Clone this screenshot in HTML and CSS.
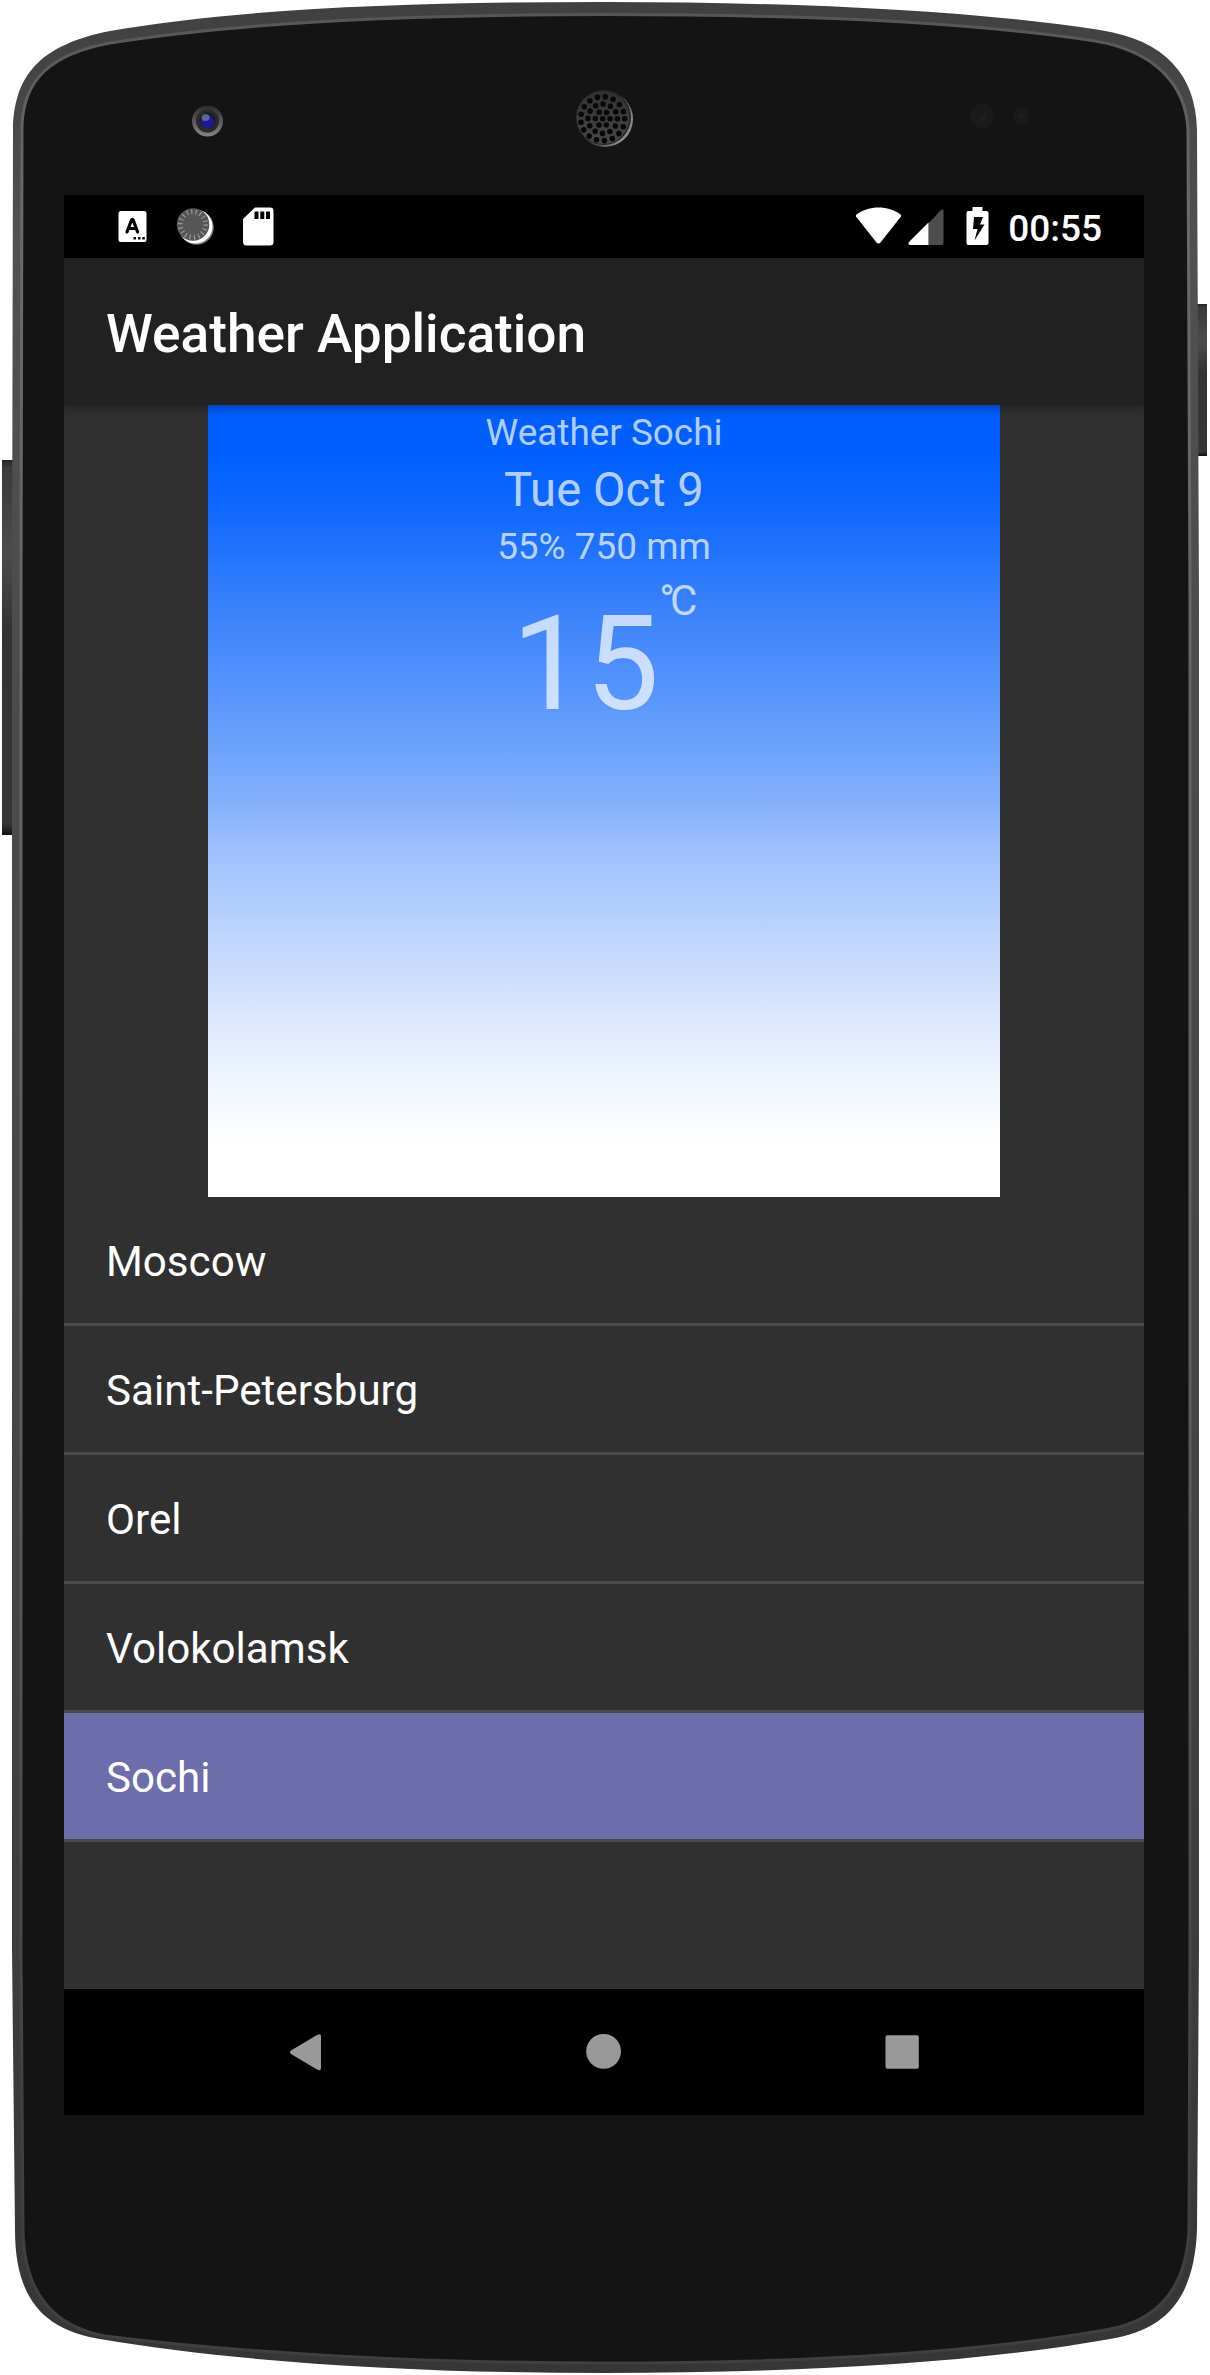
FILE: index.html
```html
<!DOCTYPE html>
<html lang="en">
<head>
<meta charset="utf-8">
<title>Weather Application</title>
<link rel="stylesheet" href="styles.css">
</head>
<body>
<div class="device">
  <svg class="frame" viewBox="0 0 1210 2375" aria-hidden="true">
    <defs>
      <linearGradient id="rim" x1="0" y1="0" x2="0" y2="1">
        <stop offset="0" stop-color="#404041"/><stop offset=".1" stop-color="#505052"/><stop offset=".6" stop-color="#454547"/><stop offset="1" stop-color="#363636"/>
      </linearGradient>
      <linearGradient id="shine" x1="0" y1="0" x2="0" y2="1">
        <stop offset="0" stop-color="#565657"/><stop offset=".08" stop-color="#6a6a6d"/><stop offset=".6" stop-color="#5c5c5f"/><stop offset=".9" stop-color="#404040"/><stop offset="1" stop-color="#404040"/>
      </linearGradient>
      <linearGradient id="key" x1="0" y1="0" x2="0" y2="1">
        <stop offset="0" stop-color="#242424"/><stop offset=".02" stop-color="#3a3a3a"/><stop offset=".25" stop-color="#4c4c4c"/><stop offset=".45" stop-color="#333"/><stop offset=".97" stop-color="#363636"/><stop offset="1" stop-color="#111"/>
      </linearGradient>
      <linearGradient id="lens" x1="0" y1="0" x2="0" y2="1">
        <stop offset="0" stop-color="#2b2b2b"/><stop offset="1" stop-color="#858585"/>
      </linearGradient>
      <radialGradient id="glass" cx=".5" cy=".6" r=".5">
        <stop offset="0" stop-color="#1a14b4"/><stop offset=".6" stop-color="#201d86"/><stop offset="1" stop-color="#17172e"/>
      </radialGradient>
      <linearGradient id="ring" x1="0" y1="0" x2="1" y2=".5">
        <stop offset=".4" stop-color="#262626"/><stop offset="1" stop-color="#8a8a8a"/>
      </linearGradient>
      <linearGradient id="mesh" x1="0" y1="0" x2="0" y2="1">
        <stop offset="0" stop-color="#303030"/><stop offset="1" stop-color="#484848"/>
      </linearGradient>
    </defs>
    <rect x="2" y="460" width="12" height="375" fill="url(#key)"/>
    <rect x="1196" y="304" width="11" height="152" fill="url(#key)"/>
    <path fill="url(#rim)" d="M12 600 L13 130 C14 75 40 45 110 31 C240 8 420 2 605 2 C790 2 970 10 1100 30 C1165 40 1196 75 1197 130 L1199 600 L1199 1950 L1197 2230 C1194 2300 1165 2330 1110 2339 C970 2364 790 2373 605 2373 C420 2373 240 2363 100 2339 C45 2330 15 2300 15 2230 L12 1950 Z"/>
    <path fill="#141414" stroke="url(#shine)" stroke-width="3" d="M21 600 L22 125 C24 80 50 54 110 43 C240 22 420 14.500 605 14.500 C790 14.500 970 22 1095 41 C1155 51 1186 85 1188 130 L1190 600 L1190 1950 L1189 2230 C1186 2290 1156 2322 1105 2330 C970 2354 790 2363 605 2363 C420 2363 240 2353 105 2336 C50 2326 24 2290 23 2230 L21 1950 Z"/>
    <circle cx="207.500" cy="121" r="15.500" fill="url(#lens)"/>
    <circle cx="207.500" cy="121" r="11.500" fill="#2a2a2c"/>
    <circle cx="207.500" cy="120.500" r="8" fill="url(#glass)"/>
    <ellipse cx="205.500" cy="117.500" rx="4" ry="3.500" fill="#8e96ad" opacity=".6"/>
    <circle cx="982" cy="116" r="12" fill="#1b1a1a"/><circle cx="983" cy="118" r="3" fill="#251d1b"/>
    <circle cx="1021" cy="116" r="8" fill="#1b1a1a"/><circle cx="1021" cy="117" r="2.500" fill="#251d1b"/>
    <circle cx="605" cy="119" r="28" fill="url(#ring)"/>
    <circle cx="603.500" cy="117.500" r="27.500" fill="#222"/>
    <circle cx="603" cy="117.500" r="26.500" fill="url(#mesh)"/>
    <g stroke="#080808" stroke-width="5.600" stroke-linecap="round" fill="none">
      <circle cx="602.700" cy="118.700" r="7.300" stroke-dasharray="0 7.645"/>
      <circle cx="602.700" cy="118.700" r="14.700" stroke-dasharray="0 7.697"/>
      <circle cx="602.700" cy="118.700" r="22" stroke-dasharray="0 8.131"/>
      <path d="M602.700 118.700h.01"/>
    </g>
  </svg>

  <main class="screen">
    <header class="status-bar">
      <svg class="status-icons" viewBox="0 0 180 63" aria-hidden="true">
        <rect x="54.500" y="16" width="28" height="31" rx="2.500" fill="#fff"/>
        <path d="M63 37 L67.500 25 Q68.300 23.500 69.200 25 L73.600 37 M65 33.500h7" fill="none" stroke="#000" stroke-width="3.200" stroke-linecap="round" stroke-linejoin="round"/>
        <path d="M69.500 42h2.500v2.500h-2.500zM74 42h2.500v2.500H74zM78.300 42h2.500v2.500h-2.500z"/>
        <circle cx="132.500" cy="32.500" r="17.300" fill="#777"/>
        <circle cx="131.500" cy="31.500" r="17" fill="#fff"/>
        <circle cx="129" cy="29.500" r="16.300" fill="#565656"/>
        <circle cx="129" cy="29.500" r="12.700" fill="none" stroke="#999" stroke-width="5" stroke-dasharray="1.200 3.233"/>
        <path d="M191 12.500 h15 a3.500 3.500 0 0 1 3.500 3.500 v31 a3.500 3.500 0 0 1-3.500 3.500 h-23.500 a3.500 3.500 0 0 1-3.500-3.500 V24 Z" fill="#fff"/>
        <path d="M190.500 16.500h4v7.500h-4zM196.300 16.500h4v7.500h-4zM202 16.500h4v7.500h-4z"/>
      </svg>
      <div class="status-right">
        <svg class="signals" viewBox="0 0 133 38" aria-hidden="true">
          <path d="M.5 7.500 C13-1.800 32-1.800 44.500 7.500 Q45.500 8.500 45 9.500 L24.500 35.500 Q22.500 37.500 20.500 35.500 L0 9.500 Q-.5 8.500 .5 7.500Z" fill="#fff"/>
          <path d="M72.500 16.500 L84 4 Q87.500 1 87.500 4 V36 Q87.500 38 85.500 38 H72.500Z" fill="#4d4d4d"/>
          <path d="M72.500 15.500 V38 H54 Q51 37 53.500 34.500Z" fill="#fff"/>
          <path fill-rule="evenodd" d="M116.500 0h10v4h4q2 0 2 2v30q0 2-2 2h-18q-2 0-2-2V6q0-2 2-2h4z M118 10 L117 22 H121.500 L118.500 33.500 L128.500 17.500 H124 L127 10Z" fill="#fff"/>
        </svg>
        <time class="clock">00:55</time>
      </div>
    </header>
    <h1 class="app-bar">Weather Application</h1>
    <section class="forecast">
      <p class="place">Weather Sochi</p>
      <p class="date">Tue Oct 9</p>
      <p class="details">55% 750 mm</p>
      <p class="temperature"><span class="degrees">15</span><span class="unit">°C</span></p>
    </section>
    <ul class="cities">
      <li class="city">Moscow</li>
      <li class="city">Saint-Petersburg</li>
      <li class="city">Orel</li>
      <li class="city">Volokolamsk</li>
      <li class="city selected">Sochi</li>
    </ul>
    <nav class="nav-bar">
      <svg class="nav-icons" viewBox="0 0 1080 126" fill="#999" aria-hidden="true">
        <path d="M227 61.500 L253 46 Q257 44 257 47 V79 Q257 82.500 253 80.500 L227 65 Q225 63.200 227 61.500Z"/>
        <circle cx="539.600" cy="62.400" r="17.400"/>
        <rect x="821.500" y="46.300" width="33.300" height="33.400" rx="2"/>
      </svg>
    </nav>
  </main>
</div>
</body>
</html>
```
FILE: styles.css
```css
* {
  box-sizing: border-box;
}

body {
  margin: 0;
  background: #fff;
  color: #fff;
  font-family: Roboto, "Liberation Sans", sans-serif;
}

/* The frame and the screen share one grid cell. */
.device {
  display: grid;
  width: 1210px;
  height: 2375px;
}

.frame,
.screen {
  grid-area: 1 / 1;
}

.frame {
  width: 1210px;
  height: 2375px;
}

.screen {
  display: flex;
  flex-direction: column;
  width: 1080px;
  height: 1920px;
  margin: 195px 0 0 64px;
  background: #303030;
}

.status-bar {
  display: flex;
  justify-content: space-between;
  height: 63px;
  background: #000;
}

.status-icons {
  width: 180px;
  height: 63px;
  overflow: visible;
}

.status-right {
  display: flex;
  gap: 19px;
  padding: 12px 42px 0 0;
}

.signals {
  width: 133px;
  height: 38px;
}

.clock {
  font-size: 37px;
  font-weight: 500;
  line-height: 43px;
}

.app-bar {
  z-index: 1;
  height: 147px;
  margin: 0;
  padding-left: 42px;
  background: #212121;
  box-shadow: 0 3px 10px rgba(0, 0, 0, 0.35);
  clip-path: inset(0 0 -20px 0);
  font-size: 53.2px;
  font-weight: 500;
  line-height: 153px;
}

.forecast {
  display: flex;
  flex-direction: column;
  align-items: center;
  width: 792px;
  height: 792px;
  margin: 0 auto;
  padding-top: 3px;
  background: linear-gradient(
    #005eff 0%,
    #005fff 6%,
    #0e68fe 13%,
    #3880fb 25%,
    #5896fd 37%,
    #83b0fc 50%,
    #9dc0fe 56%,
    #c4d9fc 69%,
    #e8f0fe 82%,
    #fff 93%
  );
  color: rgba(255, 255, 255, 0.7);
}

.forecast p {
  margin: 0;
}

.place,
.details {
  font-size: 36.9px;
  line-height: 50px;
}

.date {
  font-size: 47.25px;
  line-height: 64px;
}

.temperature {
  display: flex;
  align-items: flex-start;
}

.degrees {
  padding: 15px 0 0 2px;
  font-size: 131.25px;
  line-height: 154px;
}

.unit {
  margin-right: 6px;
  padding-top: 4px;
  font-size: 42px;
  letter-spacing: -5px;
  line-height: 50px;
}

.cities {
  flex: 1;
  margin: 0;
  padding: 0;
  list-style: none;
}

.city {
  height: 129px;
  padding-left: 42px;
  border-bottom: 3px solid #4a4a4a;
  font-size: 42.15px;
  line-height: 130px;
}

.selected {
  background: #6d6dab;
  background-clip: padding-box;
}

.nav-bar {
  height: 126px;
  background: #000;
}

.nav-icons {
  display: block;
  width: 1080px;
  height: 126px;
}
```
